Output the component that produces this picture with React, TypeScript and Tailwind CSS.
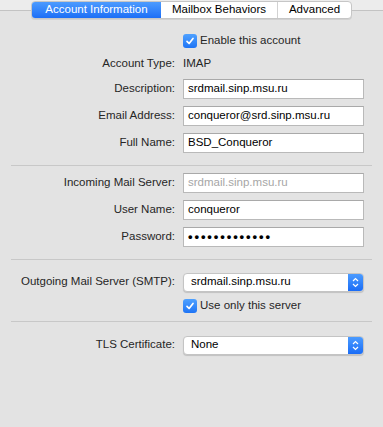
import React from "react";

function Check() {
  return (
    <span className="w-[14px] h-[14px] rounded-[3px] bg-gradient-to-b from-[#4fa1ff] to-[#1e74f5] flex items-center justify-center shrink-0">
      <svg width="10" height="10" viewBox="0 0 10 10" fill="none">
        <path d="M2 5.3 L4.1 7.5 L8 2.4" stroke="white" strokeWidth="1.7" strokeLinecap="round" strokeLinejoin="round" />
      </svg>
    </span>
  );
}

function Field({ value, dim, dots }: { value: string; dim?: boolean; dots?: boolean }) {
  return (
    <div
      className={`w-[181px] h-[20px] bg-white border border-[#b9b9b9] border-t-[#a9a9a9] flex items-center pl-[4px] ${
        dim ? "text-[#a6a6a6]" : "text-black"
      } ${dots ? "tracking-[1.9px] text-[13px] font-bold" : ""}`}
    >
      {value}
    </div>
  );
}

function Popup({ value }: { value: string }) {
  return (
    <div className="w-[181px] h-[19px] bg-white rounded-[4px] border border-[#c4c4c4] shadow-[0_1px_1px_rgba(0,0,0,0.15)] flex items-stretch overflow-hidden">
      <div className="flex-1 flex items-center pl-[7px] text-black">{value}</div>
      <div className="w-[15px] bg-gradient-to-b from-[#4b9bff] to-[#1a6cf6] flex items-center justify-center">
        <svg width="7" height="11" viewBox="0 0 7 11" fill="none">
          <path d="M1 4 L3.5 1.5 L6 4" stroke="white" strokeWidth="1.2" />
          <path d="M1 7 L3.5 9.5 L6 7" stroke="white" strokeWidth="1.2" />
        </svg>
      </div>
    </div>
  );
}

function Row({ label, children }: { label: string; children: React.ReactNode }) {
  return (
    <div className="flex items-center">
      <div className="w-[176px] pr-[1px] text-right text-[#262626] whitespace-nowrap">{label}</div>
      <div className="ml-[7px]">{children}</div>
    </div>
  );
}

export default function App() {
  return (
    <div
      className="w-[383px] h-[427px] bg-[#ececec] text-[11.5px] leading-none overflow-hidden"
      style={{ fontFamily: '"Liberation Sans", Arial, sans-serif' }}
    >
      <div className="mt-[10px] h-[417px] border-t border-[#c3c3c3] bg-[#e3e3e3]">
        {/* Tabs */}
        <div className="-mt-[10px] ml-[31px] w-[321px] h-[18px] flex rounded-[4px] border border-[#c6c6c6] bg-white overflow-hidden shadow-[0_1px_0_rgba(0,0,0,0.08)]">
          <div className="w-[129px] bg-gradient-to-b from-[#4c9bff] to-[#1c6ef6] text-white flex items-center justify-center">
            Account Information
          </div>
          <div className="w-[117px] border-r border-[#d2d2d2] text-black flex items-center justify-center">
            Mailbox Behaviors
          </div>
          <div className="flex-1 text-black flex items-center justify-center">Advanced</div>
        </div>

        <div className="mt-[15px] ml-[183px] flex items-center gap-[3px] h-[14px]">
          <Check />
          <span className="text-[#262626]">Enable this account</span>
        </div>

        <div className="mt-[10px] flex flex-col">
          <Row label="Account Type:">
            <span className="text-[#262626]">IMAP</span>
          </Row>
        </div>

        <div className="mt-[9px] flex flex-col gap-[7px]">
          <Row label="Description:">
            <Field value="srdmail.sinp.msu.ru" />
          </Row>
          <Row label="Email Address:">
            <Field value="conqueror@srd.sinp.msu.ru" />
          </Row>
          <Row label="Full Name:">
            <Field value="BSD_Conqueror" />
          </Row>
        </div>

        <div className="mt-[12px] mx-[11px] border-t border-[#c8c8c8]" />

        <div className="mt-[7px] flex flex-col gap-[7px]">
          <Row label="Incoming Mail Server:">
            <Field value="srdmail.sinp.msu.ru" dim />
          </Row>
          <Row label="User Name:">
            <Field value="conqueror" />
          </Row>
          <Row label="Password:">
            <Field value="•••••••••••••" dots />
          </Row>
        </div>

        <div className="mt-[12px] mx-[11px] border-t border-[#c8c8c8]" />

        <div className="mt-[13px]">
          <Row label="Outgoing Mail Server (SMTP):">
            <Popup value="srdmail.sinp.msu.ru" />
          </Row>
        </div>

        <div className="mt-[7px] ml-[183px] flex items-center gap-[3px] h-[14px]">
          <Check />
          <span className="text-[#262626]">Use only this server</span>
        </div>

        <div className="mt-[8px] mx-[11px] border-t border-[#c8c8c8]" />

        <div className="mt-[14px]">
          <Row label="TLS Certificate:">
            <Popup value="None" />
          </Row>
        </div>
      </div>
    </div>
  );
}
